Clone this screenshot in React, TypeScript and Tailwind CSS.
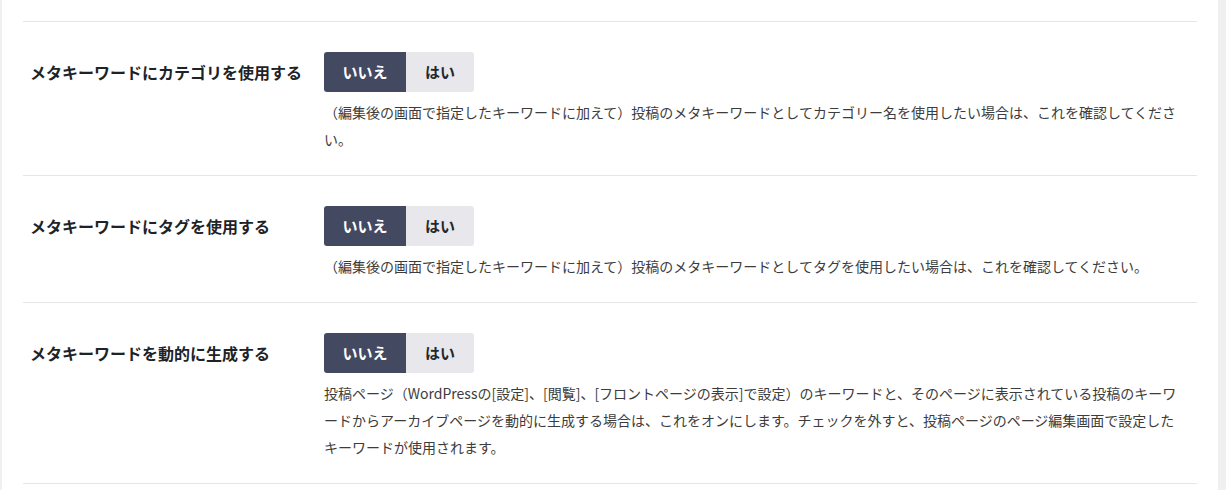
const rows = [
  {
    label: "メタキーワードにカテゴリを使用する",
    desc: "（編集後の画面で指定したキーワードに加えて）投稿のメタキーワードとしてカテゴリー名を使用したい場合は、これを確認してください。",
  },
  {
    label: "メタキーワードにタグを使用する",
    desc: "（編集後の画面で指定したキーワードに加えて）投稿のメタキーワードとしてタグを使用したい場合は、これを確認してください。",
  },
  {
    label: "メタキーワードを動的に生成する",
    desc: "投稿ページ（WordPressの[設定]、[閲覧]、[フロントページの表示]で設定）のキーワードと、そのページに表示されている投稿のキーワードからアーカイブページを動的に生成する場合は、これをオンにします。チェックを外すと、投稿ページのページ編集画面で設定したキーワードが使用されます。",
  },
];

function Toggle() {
  return (
    <div className="flex h-10 w-[150px] overflow-hidden rounded-[3px] text-[15px] font-bold">
      <button className="flex w-[82px] items-center justify-center bg-[#434961] text-white">
        いいえ
      </button>
      <button className="flex flex-1 items-center justify-center bg-[#e8e8ec] text-[#23282d]">
        はい
      </button>
    </div>
  );
}

export default function App() {
  return (
    <div
      className="flex h-[490px] w-[1226px] bg-[#f0f0f1]"
      style={{ fontFamily: '"Noto Sans CJK JP", "Noto Sans", sans-serif' }}
    >
      <div className="ml-[2px] w-[1216px] bg-white pt-[21px]">
        <div className="ml-[21px] w-[1174px] border-t border-[#e6e6e8]">
          {rows.map((row) => (
            <div
              key={row.label}
              className="flex border-b border-[#e6e6e8] pb-[22px] pt-[30px]"
            >
              <div className="w-[301px] pl-[7px] text-[16px] font-bold leading-10 text-[#1d2327]">
                {row.label}
              </div>
              <div className="flex flex-col">
                <Toggle />
                <p className="mt-[7px] w-[864px] text-[14px] leading-[27px] text-[#3c3c3c]">
                  {row.desc}
                </p>
              </div>
            </div>
          ))}
        </div>
      </div>
    </div>
  );
}
